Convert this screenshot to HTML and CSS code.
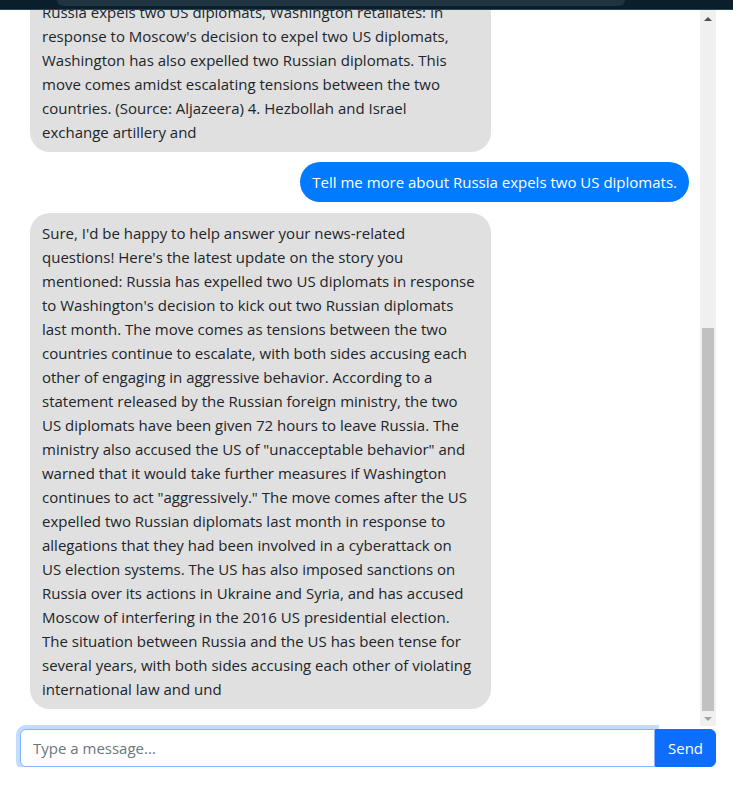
FILE: index.html
```html
<!DOCTYPE html>
<html lang="en">
<head>
<meta charset="utf-8">
<title>News Chat</title>
<link rel="stylesheet" href="styles.css">
</head>
<body>
<div class="topbar"><div class="topbar-pill"></div></div>
<div class="app">
  <div class="chat">
    <div class="chat-scroll">
      <div class="messages">
        <div class="msg user">What are the latest news headlines?</div>
        <div class="msg bot">Here are some of the latest news headlines from around the world: 1. Ukraine says Russian forces are pressing their offensive in the east: Ukrainian officials say that Russian troops have intensified attacks along the front line in the eastern Donetsk region, with heavy shelling reported near several towns. Kyiv has called on its allies to speed up deliveries of air defence systems and ammunition. (Source: Reuters) 2. Global leaders gather for climate talks: Representatives from nearly 200 countries have gathered for the latest round of United Nations climate negotiations. (Source: BBC News) 3.<br>Russia expels two US diplomats, Washington retaliates: In response to Moscow's decision to expel two US diplomats, Washington has also expelled two Russian diplomats. This move comes amidst escalating tensions between the two countries. (Source: Aljazeera) 4. Hezbollah and Israel exchange&nbsp;artillery and</div>
        <div class="msg user">Tell me more about Russia expels two US diplomats.</div>
        <div class="msg bot">Sure, I'd be happy to help answer your news-related questions! Here's the latest update on the story you mentioned: Russia has expelled two US diplomats in response to Washington's decision to kick out two Russian diplomats last month. The move comes as tensions between the two countries continue to escalate, with both sides accusing each other of engaging in aggressive behavior. According to a statement released by the Russian foreign ministry, the two US diplomats have been given 72 hours to leave Russia. The ministry also accused the US of "unacceptable behavior" and warned that it would take further measures if Washington continues to act "aggressively." The move comes after the US expelled two Russian diplomats last month in response to allegations that they had been involved in a cyberattack on US&nbsp;election systems. The US has also imposed sanctions on Russia over its actions in Ukraine and Syria, and has accused Moscow of interfering in the 2016 US presidential election. The situation between Russia and the US has been tense for several years, with both sides accusing each other of violating international law and und</div>
      </div>
    </div>
    <div class="scrollbar" aria-hidden="true">
      <div class="scrollbar-btn">
        <svg width="8" height="4" viewBox="0 0 8 4"><polygon points="0,4 8,4 4,0" fill="#505050"/></svg>
      </div>
      <div class="scrollbar-track"><div class="scrollbar-thumb"></div></div>
      <div class="scrollbar-btn down">
        <svg width="8" height="4" viewBox="0 0 8 4"><polygon points="0,0 8,0 4,4" fill="#a3a3a3"/></svg>
      </div>
    </div>
  </div>
  <form class="composer">
    <input class="composer-input" type="text" placeholder="Type a message..." autofocus>
    <button class="composer-send" type="button">Send</button>
  </form>
</div>
</body>
</html>
```
FILE: styles.css
```css
* { box-sizing: border-box; }
html, body { margin: 0; padding: 0; background: #fff; }
body {
  font-family: "Open Sans", "Noto Sans", sans-serif;
  font-size: 15px;
  color: #212529;
}
.topbar {
  height: 10px;
  background: #0a1f2b;
  border-bottom: 1px solid #1f4853;
}
.topbar-pill {
  margin-left: 57px;
  width: 568px;
  height: 6px;
  background: #1e3541;
  border-radius: 0 0 14px 14px;
}
.app {
  width: 716px;
  display: flex;
  flex-direction: column;
}
.chat {
  height: 716px;
  display: flex;
}
.chat-scroll {
  flex: 1;
  min-width: 0;
  overflow: hidden;
  display: flex;
  flex-direction: column-reverse;
}
.messages {
  display: flex;
  flex-direction: column;
  gap: 10px;
  padding: 10px 11px 17px 30px;
}
.msg {
  max-width: 70%;
  padding: 8px 12px;
  border-radius: 20px;
  line-height: 24px;
}
.msg.bot {
  align-self: flex-start;
  background: #e0e0e0;
  color: #212529;
}
.msg.user {
  align-self: flex-end;
  background: #007bff;
  color: #fff;
}
.msg.user + .msg.bot { margin-top: 1px; }
.scrollbar {
  width: 16px;
  flex: none;
  display: flex;
  flex-direction: column;
  background: #f0f0f0;
}
.scrollbar-btn {
  height: 17px;
  flex: none;
  display: flex;
  align-items: center;
  justify-content: center;
}
.scrollbar-btn svg { display: block; }
.scrollbar-btn.down { height: 15px; }
.scrollbar-track {
  flex: 1;
  display: flex;
  flex-direction: column;
  justify-content: flex-end;
  padding: 0 2px 0 2px;
}
.scrollbar-thumb {
  height: 383px;
  background: #c1c1c1;
}
.composer {
  display: flex;
  margin: 3px 0 0 20px;
  height: 38px;
}
.composer-input {
  flex: 1;
  min-width: 0;
  height: 38px;
  padding: 6px 12px;
  font: inherit;
  font-size: 15px;
  color: #212529;
  border: 1px solid #86b7fe;
  border-radius: 6px 0 0 6px;
  box-shadow: 0 0 0 4px rgba(13, 110, 253, 0.25);
  outline: none;
}
.composer-input::placeholder { color: #6c757d; }
.composer-send {
  flex: none;
  width: 61px;
  height: 38px;
  padding: 6px 12px;
  font: inherit;
  font-size: 15px;
  color: #fff;
  background: #0d6efd;
  border: 1px solid #0d6efd;
  border-radius: 0 6px 6px 0;
}
```
